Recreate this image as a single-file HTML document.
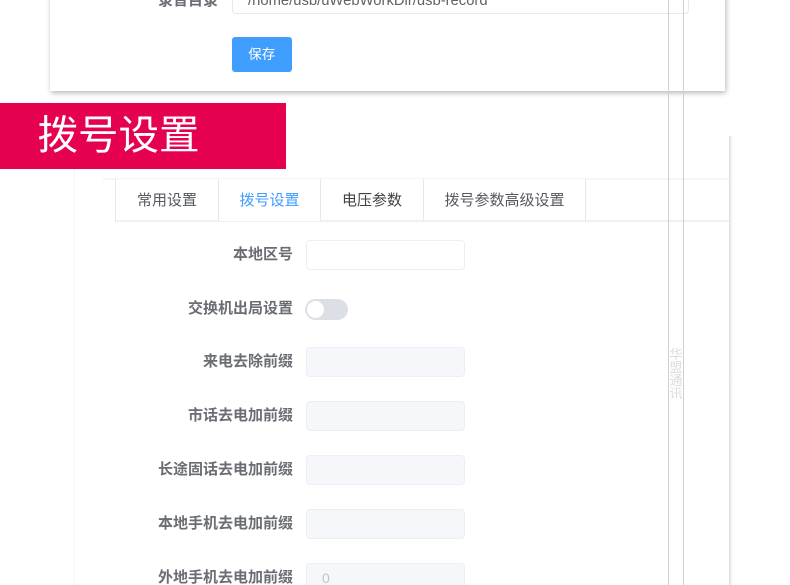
<!DOCTYPE html>
<html lang="zh">
<head>
<meta charset="utf-8">
<style>
html,body{margin:0;padding:0;background:#fff;width:790px;height:585px;overflow:hidden}
#w{position:relative;width:790px;height:585px;overflow:hidden;background:#fff;font-family:"Liberation Sans","Noto Sans CJK SC",sans-serif;filter:blur(.3px)}
.a{position:absolute;box-sizing:border-box}
.lab{position:absolute;right:497px;font-size:15px;font-weight:700;color:#6a6d73;line-height:20px;white-space:nowrap;text-align:right}
.inp{position:absolute;left:305.5px;width:159px;height:29.5px;box-sizing:border-box;border:1.5px solid #eceef4;border-radius:4px;background:#f5f7fa}
.tab{position:absolute;top:179px;height:41px;box-sizing:border-box;font-size:15px;line-height:43px;text-align:center;color:#404246;background:#fff}
.v{position:absolute;top:179px;width:1px;height:42px;background:#e6e8ee}
</style>
</head>
<body>
<div id="w">
<div class="a" style="left:50px;top:-40px;width:675px;height:131px;background:#fff;box-shadow:1px 2px 5px rgba(0,0,0,.28)"></div>
<div class="lab" style="right:572px;top:-9px;">录音目录</div>
<div class="a" style="left:232px;top:-20px;width:456.5px;height:34px;border:1.5px solid #e6e9f0;border-radius:4px;background:#fff"></div>
<div class="a" style="left:248px;top:-9px;font-size:14.8px;line-height:20px;color:#606266;white-space:nowrap">/home/usb/uWebWorkDir/usb-record</div>
<div class="a" style="left:231.500px;top:36.500px;width:60.500px;height:35px;background:#409eff;border-radius:3px;color:#fff;font-size:13.500px;line-height:36px;text-align:center">保存</div>

<div class="a" style="left:74px;top:169px;width:1px;height:416px;background:#f6f6f6"></div>
<div class="a" style="left:729px;top:136px;width:4px;height:449px;background:linear-gradient(to right,#dadada,#f2f2f2 50%,#fff)"></div>

<div class="a" style="left:0;top:103px;width:286px;height:66px;background:#e60050;color:#fff;font-size:40.500px;line-height:65px;padding-left:37.500px;white-space:nowrap">拨号设置</div>

<div class="a" style="left:103px;top:178px;width:626px;height:2px;background:#f4f5f8"></div>
<div class="a" style="left:115px;top:220px;width:614px;height:1.5px;background:#eff0f5"></div>
<div class="tab" style="left:116px;width:102px;color:#55585d">常用设置</div>
<div class="tab" style="left:219px;width:101px;color:#409eff;height:42px">拨号设置</div>
<div class="tab" style="left:321px;width:102px">电压参数</div>
<div class="tab" style="left:424px;width:161px;color:#55585d">拨号参数高级设置</div>
<div class="v" style="left:115px"></div>
<div class="v" style="left:218px"></div>
<div class="v" style="left:320px"></div>
<div class="v" style="left:423px"></div>
<div class="v" style="left:585px"></div>

<div class="lab" style="top:245px">本地区号</div>
<div class="inp" style="top:240px;background:#fff"></div>
<div class="lab" style="top:299px">交换机出局设置</div>
<div class="a" style="left:305px;top:299px;width:43px;height:21px;border-radius:11px;background:#dcdfe6"></div>
<div class="a" style="left:307px;top:301px;width:17px;height:17px;border-radius:50%;background:#fff"></div>
<div class="lab" style="top:352px">来电去除前缀</div>
<div class="inp" style="top:347px"></div>
<div class="lab" style="top:406px">市话去电加前缀</div>
<div class="inp" style="top:401px"></div>
<div class="lab" style="top:460px">长途固话去电加前缀</div>
<div class="inp" style="top:455px"></div>
<div class="lab" style="top:514px">本地手机去电加前缀</div>
<div class="inp" style="top:509px"></div>
<div class="lab" style="top:568px">外地手机去电加前缀</div>
<div class="inp" style="top:563px"></div>
<div class="a" style="left:322px;top:568px;font-size:14px;line-height:20px;color:#c0c4cc">0</div>

<div class="a" style="left:668px;top:0;width:1px;height:585px;background:#cfcfd6"></div>
<div class="a" style="left:683px;top:0;width:1px;height:585px;background:#cfcfd6"></div>
<div class="a" style="left:669px;top:348px;width:14px;font-size:13px;line-height:13px;color:#dcdcdc;text-align:center">华<br>盟<br>通<br>讯</div>
</div>
</body>
</html>
